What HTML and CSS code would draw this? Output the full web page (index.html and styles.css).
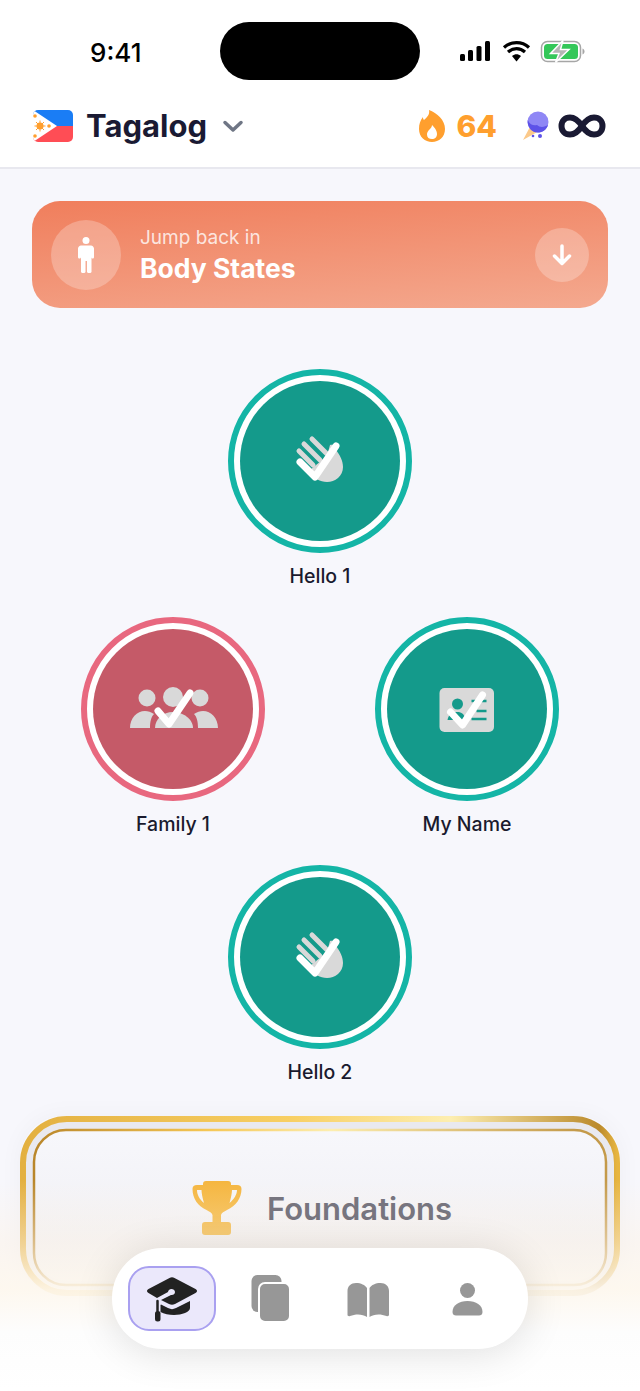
FILE: index.html
```html
<!DOCTYPE html>
<html lang="en">
<head>
    <meta charset="UTF-8">
    <meta name="viewport" content="width=device-width, initial-scale=1.0">
    <title>Tagalog</title>
    <link rel="stylesheet" href="styles.css">
</head>
<body>
<div class="phone">
    <header class="top">
        <div class="status">
            <span class="clock">9:41</span>
            <div class="island"></div>
            <svg class="status-icons" width="126" height="24" viewBox="0 0 126 24">
                <rect x="0" y="14" width="5" height="7" rx="1.5" fill="#000"/>
                <rect x="8" y="10" width="5" height="11" rx="1.5" fill="#000"/>
                <rect x="16.500" y="6" width="5" height="15" rx="1.500" fill="#000"/>
                <rect x="25" y="1" width="5" height="20" rx="1.500" fill="#000"/>
                <path d="M44 7.500C51 1 62 1 69 7.500M48 12C53 7.500 60 7.500 65 12" fill="none" stroke="#000" stroke-width="3.200"/>
                <path d="M52 16C55 13.500 58 13.500 61 16L56.500 21.500Z" fill="#000"/>
                <rect x="81.500" y="1.500" width="39" height="20" rx="6" fill="#fff" stroke="#a6a6a6" stroke-width="1.500"/>
                <rect x="84" y="4" width="34" height="15" rx="3.500" fill="#34c759"/>
                <path d="M122.500 8.500v6c1.300-.5 2-1.700 2-3s-.7-2.500-2-3Z" fill="#a6a6a6"/>
                <path d="M103 .5L90.500 13.500H99L95.500 22.500L109 9.500H100.500Z" fill="#b5b5b5" stroke="#fff" stroke-width="1.500"/>
            </svg>
        </div>
        <div class="topbar">
            <div class="lang">
                <svg class="flag" width="40" height="32" viewBox="0 0 40 32">
                    <rect width="40" height="16" y="0" fill="#1a7df5"/>
                    <rect width="40" height="16" y="16" fill="#ff4d55"/>
                    <path d="M0 0L24 16L0 32Z" fill="#fff"/>
                    <circle cx="7" cy="16" r="3.500" fill="#ff9f2e"/>
                    <path d="M7 10.500V21.500M1.500 16H12.500M3 12L11 20M11 12L3 20" stroke="#ff9f2e" stroke-width="1"/>
                    <circle cx="2" cy="6" r="1.800" fill="#ff9f2e"/>
                    <circle cx="2" cy="26" r="1.800" fill="#ff9f2e"/>
                    <circle cx="16" cy="16" r="1.800" fill="#ff9f2e"/>
                </svg>
                <span class="lang-name">Tagalog</span>
                <svg class="chevron" width="22" height="14" viewBox="0 0 22 14">
                    <path d="M3 3.500L11 11L19 3.500" fill="none" stroke="#6f7685" stroke-width="3.500" stroke-linecap="round" stroke-linejoin="round"/>
                </svg>
            </div>
            <div class="stats">
                <svg width="28" height="34" viewBox="0 0 28 34">
                    <path d="M11 1C12 6 9 8 6 11C5 10 5 9 5 8C2 12 1 15 1 20C1 28 7 33 14 33C21 33 27 28 27 20C27 11 19 4 11 1Z" fill="#ff9f2e"/>
                    <path d="M14 16C14 20 9 21 9 25.500C9 28.500 11 30 14 30C17 30 19 28 19 25C19 21 16 18 14 16Z" fill="#fff"/>
                </svg>
                <span class="streak">64</span>
                <svg class="cone" width="28" height="30" viewBox="0 0 28 30">
                    <path d="M1 29L9 14L17 20Z" fill="#fbc98a"/>
                    <circle cx="16" cy="11" r="10.500" fill="#8f87f5"/>
                    <path d="M5.700 9C8 14 12 15 15 14C18 17 23 16 26 14C24.500 19 20 21.500 16 21.500C9 21.500 5 15 5.700 9Z" fill="#5d52e8"/>
                    <circle cx="11" cy="25" r="1.300" fill="#5d52e8"/>
                    <circle cx="18" cy="25" r="2" fill="#5d52e8"/>
                </svg>
                <svg width="48" height="24" viewBox="0 0 48 24">
                    <path d="M24 12C20 6 17 3.500 12 3.500C7 3.500 3.500 7 3.500 12C3.500 17 7 20.500 12 20.500C17 20.500 20 18 24 12C28 6 31 3.500 36 3.500C41 3.500 44.500 7 44.500 12C44.500 17 41 20.500 36 20.500C31 20.500 28 18 24 12Z" fill="none" stroke="#1a1a33" stroke-width="6"/>
                </svg>
            </div>
        </div>
    </header>

    <main>
        <div class="jump">
            <div class="jump-icon">
                <svg width="18" height="36" viewBox="0 0 18 36">
                    <circle cx="9" cy="3.500" r="3.500" fill="#fff"/>
                    <path d="M4 8.500H14C15.500 8.500 17 10 17 11.500V20C17 22 14.500 22 14.500 20V35C14.500 36.500 10 36.500 10 35V24H8.500V35C8.500 36.500 4 36.500 4 35V20C4 22 1 22 1 20V11.500C1 10 2.500 8.500 4 8.500Z" fill="#fff"/>
                </svg>
            </div>
            <div class="jump-text">
                <div class="jump-label">Jump back in</div>
                <div class="jump-title">Body States</div>
            </div>
            <div class="jump-btn">
                <svg width="24" height="24" viewBox="0 0 24 24">
                    <path d="M12 3V20M4.500 13L12 20.500L19.500 13" fill="none" stroke="#fff" stroke-width="3.500" stroke-linecap="round" stroke-linejoin="round"/>
                </svg>
            </div>
        </div>

        <div class="path">
            <div class="row">
                <div class="node">
                    <div class="ring">
                        <div class="disc">
                            <svg width="100" height="80" viewBox="0 1 100 80">
                                <path d="M40 50L57 36L60 25C64 24 66 27 66 30C70 35 73 41 73 47C73 56 65 62 57 62C50 62 44 58 40 54Z" fill="#d9d9d9"/>
                                <path d="M29 31L43 45M34 24L50 40M42 19L56 33" fill="none" stroke="#d9d9d9" stroke-width="5" stroke-linecap="round"/>
                                <path d="M30 42L45 57L66 26" fill="none" stroke="#fff" stroke-width="7" stroke-linecap="round" stroke-linejoin="round"/>
                            </svg>
                        </div>
                    </div>
                    <span class="node-label">Hello 1</span>
                </div>
            </div>
            <div class="row">
                <div class="node">
                    <div class="ring ring-red">
                        <div class="disc disc-red">
                            <svg width="130" height="80" viewBox="-2 -1 130 80">
                                <circle cx="37" cy="28" r="8.500" fill="#d9d9d9"/>
                                <circle cx="63" cy="27" r="10" fill="#d9d9d9"/>
                                <circle cx="90" cy="28" r="8.500" fill="#d9d9d9"/>
                                <path d="M20 58C20 48 27 41 35 41C38 41 41 42 44 44C41 47 40 52 40 58Z" fill="#d9d9d9"/>
                                <path d="M45 58C45 49 53 42 63 42C73 42 83 49 83 58Z" fill="#d9d9d9"/>
                                <path d="M108 58C108 48 101 41 93 41C90 41 87 42 84 44C87 47 88 52 88 58Z" fill="#d9d9d9"/>
                                <path d="M48 41L59 54L80 23" fill="none" stroke="#fff" stroke-width="7" stroke-linecap="round" stroke-linejoin="round"/>
                            </svg>
                        </div>
                    </div>
                    <span class="node-label">Family 1</span>
                </div>
                <div class="node">
                    <div class="ring">
                        <div class="disc">
                            <svg width="100" height="80" viewBox="-3.500 -1 100 80">
                                <rect x="19" y="18" width="54.500" height="44" rx="5" fill="#d9d9d9"/>
                                <circle cx="37" cy="34" r="5.500" fill="#149a8b"/>
                                <path d="M27 50C28 44 32 42 37 42C41 42 44 44 45 50Z" fill="#149a8b"/>
                                <path d="M51 31H66M56 41H66M51 49H66" stroke="#149a8b" stroke-width="2.500"/>
                                <path d="M30 42L42 55L62 25" fill="none" stroke="#fff" stroke-width="7" stroke-linecap="round" stroke-linejoin="round"/>
                            </svg>
                        </div>
                    </div>
                    <span class="node-label">My Name</span>
                </div>
            </div>
            <div class="row">
                <div class="node">
                    <div class="ring">
                        <div class="disc">
                            <svg width="100" height="80" viewBox="0 1 100 80">
                                <path d="M40 50L57 36L60 25C64 24 66 27 66 30C70 35 73 41 73 47C73 56 65 62 57 62C50 62 44 58 40 54Z" fill="#d9d9d9"/>
                                <path d="M29 31L43 45M34 24L50 40M42 19L56 33" fill="none" stroke="#d9d9d9" stroke-width="5" stroke-linecap="round"/>
                                <path d="M30 42L45 57L66 26" fill="none" stroke="#fff" stroke-width="7" stroke-linecap="round" stroke-linejoin="round"/>
                            </svg>
                        </div>
                    </div>
                    <span class="node-label">Hello 2</span>
                </div>
            </div>
        </div>

        <div class="trophy-card">
            <svg class="trophy-border" width="600" height="180" viewBox="0 0 600 180">
                <defs>
                    <linearGradient id="goldOuter" x1="0" y1="0" x2="1" y2="0">
                        <stop offset="0" stop-color="#e3b040"/>
                        <stop offset="0.45" stop-color="#f8cf63"/>
                        <stop offset="0.72" stop-color="#fdeeb0"/>
                        <stop offset="0.97" stop-color="#bb8a2c"/>
                        <stop offset="1" stop-color="#e7b540"/>
                    </linearGradient>
                    <linearGradient id="goldInner" x1="0" y1="0" x2="1" y2="0">
                        <stop offset="0" stop-color="#b9862a"/>
                        <stop offset="0.3" stop-color="#f5c654"/>
                        <stop offset="0.52" stop-color="#fdeeb0"/>
                        <stop offset="0.95" stop-color="#c49a4a"/>
                    </linearGradient>
                </defs>
                <rect x="9" y="9" width="582" height="160" rx="38" fill="none" stroke="#e9e9ef" stroke-width="8"/>
                <rect x="3" y="3" width="594" height="174" rx="44" fill="none" stroke="url(#goldOuter)" stroke-width="6"/>
                <rect x="14" y="14" width="572" height="155" rx="32" fill="none" stroke="url(#goldInner)" stroke-width="2.500"/>
            </svg>
            <div class="trophy-content">
                <svg width="50" height="54" viewBox="0 0 50 54">
                    <defs>
                        <linearGradient id="cup" x1="0" y1="0" x2="0" y2="1">
                            <stop offset="0" stop-color="#f5b640"/>
                            <stop offset="1" stop-color="#f6cb76"/>
                        </linearGradient>
                    </defs>
                    <path d="M11 3C11 1 12 0 14 0H36C38 0 39 1 39 3V4H45C48 4 49.500 5.500 49.500 8C49.500 17 44 25 35 29C32 30.500 29.500 32 29 34V41H36C38 41 39 42 39 44V51C39 53 38 54 36 54H13C11 54 10 53 10 51V44C10 42 11 41 13 41H20.500V34C20 32 17.500 30.500 14.500 29C5.500 25 .5 17 .5 8C.5 5.500 2 4 5 4H11ZM5 9C5 13 7 18 12 22C10.500 17 9.500 12 9.500 9ZM45 9H40C40 12 39 17 37.500 22C42.500 18 45 13 45 9Z" fill="url(#cup)"/>
                </svg>
                <span class="trophy-name">Foundations</span>
            </div>
        </div>
    </main>

    <div class="fade"></div>

    <nav class="tabs">
        <div class="tab tab-active">
            <svg width="50" height="50" viewBox="0 0 50 50">
                <path d="M22.500 4C24 3 26 3 27.500 4L48.500 15C50.500 16 50.500 18 48.500 19L28 30C26 31 24 31 22 30L14 26L24 21C26 21.500 28 20 28 18C28 16 26 15 24.500 15C22.500 15 21 16.500 21 18L10 24L1.500 19C-.5 18 -.5 16 1.500 15Z" fill="#222"/>
                <path d="M14 30.500L21 34C24 35.500 26 35.500 29 34L43 27V34C43 38 35 41 27 41C22 41 17 40 13.500 38V31Z" fill="#222"/>
                <path d="M10.500 27V37" stroke="#222" stroke-width="2.500" stroke-linecap="round"/>
                <rect x="8" y="37" width="5.500" height="10.500" rx="2.500" fill="#222"/>
            </svg>
        </div>
        <div class="tab">
            <svg width="50" height="50" viewBox="0 0 50 50">
                <rect x="6.500" y="1" width="30" height="37" rx="6" fill="#979797"/>
                <rect x="14" y="9" width="31" height="39" rx="6" fill="#979797" stroke="#fff" stroke-width="2"/>
            </svg>
        </div>
        <div class="tab">
            <svg width="50" height="50" viewBox="0 0 50 50">
                <path d="M24 14V43C20 40 13 39.500 7 42C6 42.500 4.500 42 4.500 41V17C4.500 12 8 9 13 9C18 9 22 11 24 14Z" fill="#979797"/>
                <path d="M26.500 14V43C30.500 40 37.500 39.500 43.500 42C44.500 42.500 46 42 46 41V17C46 12 42.500 9 37.500 9C32.500 9 28.500 11 26.500 14Z" fill="#979797"/>
            </svg>
        </div>
        <div class="tab">
            <svg width="50" height="50" viewBox="0 0 50 50">
                <circle cx="26.500" cy="16.500" r="7.500" fill="#979797"/>
                <path d="M11.500 38C11.500 31 18 27 26.500 27C35 27 41.500 31 41.500 38C41.500 40.500 40 41.500 38 41.500H15C13 41.500 11.500 40.500 11.500 38Z" fill="#979797"/>
            </svg>
        </div>
    </nav>
</div>
</body>
</html>
```

FILE: styles.css
```css
* {
    box-sizing: border-box;
}
body {
    margin: 0;
    font-family: Inter, "Liberation Sans", sans-serif;
    background-color: #f7f7fc;
}
.phone {
    position: relative;
    width: 640px;
    height: 1391px;
    overflow: hidden;
    background-color: #f7f7fc;
}

/* header */
.top {
    background: #fff;
    border-bottom: 2px solid #e8e8ef;
}
.status {
    display: flex;
    align-items: center;
    height: 88px;
    padding: 0 54px 0 90px;
}
.clock {
    width: 130px;
    margin-top: 16px;
    font-size: 26px;
    font-weight: 500;
    color: #000;
}
.island {
    width: 200px;
    height: 58px;
    margin-top: 14px;
    border-radius: 29px;
    background: #000;
}
.status-icons {
    margin-left: auto;
    margin-top: 16px;
}
.topbar {
    display: flex;
    align-items: center;
    justify-content: space-between;
    height: 79px;
    padding: 0 34px 4px 33px;
}
.lang {
    display: flex;
    align-items: center;
}
.flag {
    border-radius: 5px;
}
.lang-name {
    margin-left: 13px;
    font-size: 31px;
    font-weight: 700;
    color: #1a1a33;
}
.chevron {
    margin-left: 15px;
}
.stats {
    display: flex;
    align-items: center;
}
.streak {
    margin-left: 10px;
    font-size: 30px;
    font-weight: 800;
    color: #ff9f2e;
}
.cone {
    margin: 0 8px 0 25px;
}

/* jump back card */
.jump {
    display: flex;
    align-items: center;
    height: 107px;
    margin: 32px 32px 0;
    padding: 0 19px;
    border-radius: 28px;
    background: linear-gradient(175deg, #f07e5c, #f4a98f);
    color: #fff;
}
.jump-icon {
    display: flex;
    align-items: center;
    justify-content: center;
    width: 70px;
    height: 70px;
    border-radius: 50%;
    background: rgba(255, 255, 255, 0.25);
}
.jump-text {
    margin-left: 19px;
}
.jump-label {
    font-size: 19px;
    color: rgba(255, 255, 255, 0.8);
}
.jump-title {
    margin-top: 3px;
    font-size: 26.500px;
    font-weight: 700;
}
.jump-btn {
    display: flex;
    align-items: center;
    justify-content: center;
    width: 54px;
    height: 54px;
    margin-left: auto;
    margin-right: 0;
    border-radius: 50%;
    background: rgba(255, 255, 255, 0.25);
}

/* lesson path */
.path {
    margin-top: 61px;
}
.row {
    display: flex;
    justify-content: center;
    gap: 110px;
    height: 248px;
}
.node {
    display: flex;
    flex-direction: column;
    align-items: center;
    width: 184px;
}
.ring {
    width: 184px;
    height: 184px;
    padding: 6px;
    border: 6px solid #14b5a6;
    border-radius: 50%;
    background: #fff;
}
.ring-red {
    border-color: #e8687f;
}
.disc {
    display: flex;
    align-items: center;
    justify-content: center;
    width: 100%;
    height: 100%;
    border-radius: 50%;
    background: #149a8b;
}
.disc-red {
    background: #c55a68;
}
.node-label {
    margin-top: 11px;
    font-size: 19.500px;
    font-weight: 500;
    color: #1a1a2e;
}

/* achievement card */
.trophy-card {
    position: relative;
    height: 180px;
    margin: 3px 20px 0;
    border-radius: 44px;
    background: linear-gradient(180deg, #f8f8fc, #ededf2);
    box-shadow: 0 0 24px rgba(0, 0, 0, 0.04);
}
.trophy-border {
    position: absolute;
    top: 0;
    left: 0;
}
.trophy-content {
    position: relative;
    z-index: 1;
    display: flex;
    align-items: center;
    justify-content: center;
    gap: 25px;
    height: 100%;
    padding-top: 4px;
    padding-left: 4px;
}
.trophy-name {
    font-size: 31px;
    font-weight: 600;
    color: #77757f;
}
.fade {
    position: absolute;
    left: 0;
    right: 0;
    bottom: 0;
    height: 211px;
    background: linear-gradient(180deg, rgba(253, 243, 230, 0) 0%, rgba(253, 243, 230, 0.5) 30%, rgba(254, 248, 238, 0.92) 52%, #fdfdfd 72%, #fff 100%);
}

/* bottom tab bar */
.tabs {
    position: absolute;
    z-index: 2;
    left: 112px;
    top: 1248px;
    display: flex;
    align-items: center;
    gap: 10px;
    width: 416px;
    height: 101px;
    padding: 0 16px;
    border-radius: 50px;
    background: #fff;
    box-shadow: 0 4px 40px rgba(0, 0, 0, 0.12);
}
.tab {
    display: flex;
    align-items: center;
    justify-content: center;
    width: 88px;
    height: 65px;
    border-radius: 21px;
}
.tab-active {
    border: 2px solid #a9a0f0;
    background: #ebe8fb;
}
```
